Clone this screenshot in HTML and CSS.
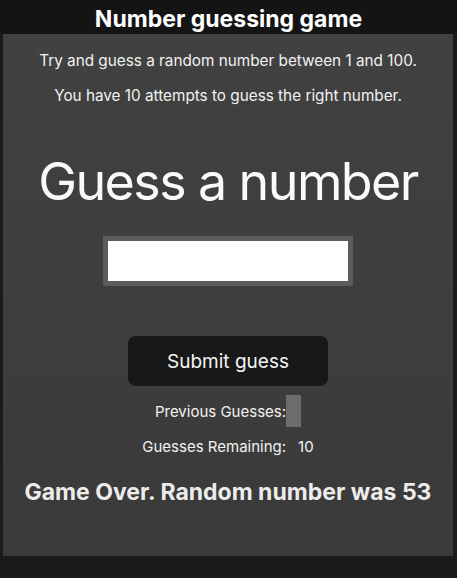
FILE: index.html
```html
<!DOCTYPE html>
<html>
<head>
<meta charset="utf-8">
<link rel="stylesheet" href="styles.css">
</head>
<body>
<header class="top">
  <h1 class="title">Number guessing game</h1>
</header>
<main class="panel">
  <p class="intro">Try and guess a random number between 1 and 100.</p>
  <p class="intro">You have 10 attempts to guess the right number.</p>
  <h2 class="heading">Guess a number</h2>
  <input class="field" type="text" aria-label="Enter a guess">
  <button class="submit" type="button">Submit guess</button>
  <div class="row prev">Previous Guesses:<span class="chip"></span></div>
  <div class="row remain">Guesses Remaining:<span class="count">10</span></div>
  <p class="over">Game Over. Random number was 53</p>
</main>
</body>
</html>
```
FILE: styles.css
```css
html, body {
  margin: 0;
  padding: 0;
}
body {
  background: #1b1b1b;
  width: 457px;
  height: 578px;
  overflow: hidden;
  font-family: Inter, "Liberation Sans", sans-serif;
  color: #f2f2f2;
}
.top {
  height: 34px;
  background: #141414;
  display: flex;
  justify-content: center;
  align-items: center;
  padding-top: 4px;
  box-sizing: border-box;
}
.title {
  margin: 0;
  font-size: 23px;
  font-weight: 700;
  color: #ffffff;
  line-height: 1;
}
.panel {
  margin: 0 4px 0 3px;
  height: 522px;
  background: linear-gradient(#414141, #3a3a3a);
  display: flex;
  flex-direction: column;
  align-items: center;
  padding-top: 18px;
  box-sizing: border-box;
}
.intro {
  margin: 0 0 17px;
  font-size: 15.3px;
  line-height: 18px;
}
.heading {
  margin: 28px 0 0;
  font-size: 52px;
  letter-spacing: -1.6px;
  font-weight: 400;
  line-height: 64px;
  color: #fafafa;
}
.field {
  margin-top: 22px;
  width: 250px;
  height: 50px;
  box-sizing: border-box;
  border: 5px solid #5c5c5c;
  background: #ffffff;
  padding: 0;
}
.submit {
  margin-top: 50px;
  width: 200px;
  height: 50px;
  border: none;
  border-radius: 8px;
  background: #181818;
  color: #f5f5f5;
  font-family: inherit;
  font-size: 19px;
}
.row {
  display: flex;
  align-items: center;
  font-size: 15px;
}
.prev {
  margin-top: 9px;
  height: 32px;
}
.chip {
  display: inline-block;
  width: 15px;
  height: 32px;
  background: #6c6c6c;
}
.remain {
  margin-top: 4px;
  height: 30px;
}
.count {
  margin-left: 12px;
}
.over {
  margin: 17px 0 0;
  font-size: 23px;
  font-weight: 700;
  color: #ececec;
}
```
